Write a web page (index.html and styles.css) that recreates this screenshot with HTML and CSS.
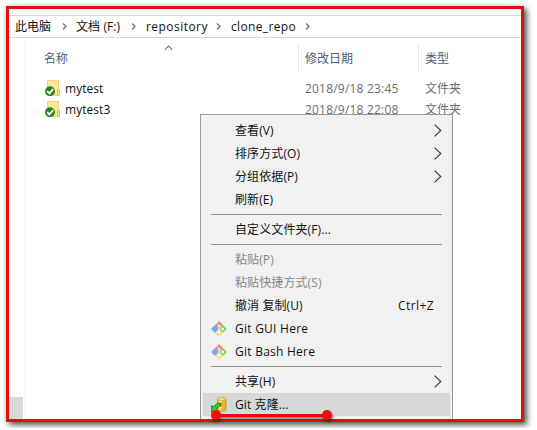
FILE: index.html
```html
<!DOCTYPE html>
<html lang="zh-CN">
<head>
<meta charset="utf-8">
<title>clone_repo</title>
<link rel="stylesheet" href="styles.css">
</head>
<body>
<svg class="defs" width="0" height="0">
  <symbol id="chev" viewBox="0 0 5 7"><path d="M1 .5 4 3.5 1 6.5" fill="none" stroke="#777" stroke-width="1.4"/></symbol>
  <symbol id="sub" viewBox="0 0 8 13"><path d="M.6.6 6.8 6.5.6 12.4" fill="none" stroke="#333" stroke-width="1.1"/></symbol>
  <symbol id="folder" viewBox="0 0 16 17">
    <path d="M2.5.5h11v15h-11z" fill="#ffe799" stroke="#efd27c"/>
    <path d="M12.5 9.5h2v6h-2z" fill="#ffe08a" stroke="#e3bd55"/>
    <circle cx="5" cy="11.2" r="5" fill="#298a1c"/>
    <path d="M2.2 11.2 4.4 13.4 8.2 9" fill="none" stroke="#fff" stroke-width="1.8"/>
  </symbol>
  <symbol id="git" viewBox="0 0 16 16">
    <path d="M8 0 12 4 8 8 4 4z" fill="#ef8587"/>
    <path d="M4 4 8 8 4 12 0 8z" fill="#7ba6ec"/>
    <path d="M12 4 16 8 12 12 8 8z" fill="#86d36b"/>
    <path d="M8 8 12 12 8 16 4 12z" fill="#fbdf8a"/>
    <path d="M5.600 2 8 4.500 11.500 8M8 5v7" fill="none" stroke="#f6efed" stroke-width=".9"/>
    <circle cx="8" cy="5" r="1" fill="#fff"/><circle cx="11.800" cy="8" r="1.300" fill="#fff"/><circle cx="8" cy="11.500" r="1.100" fill="#fff"/>
  </symbol>
  <symbol id="clone" viewBox="0 0 16 16">
    <path d="M6.5 2v10.5c0 2 8.5 2 8.5 0V2z" fill="#f0b52c" stroke="#c58a17" stroke-width=".8"/>
    <path d="M8 3v10h2.500V3z" fill="#ffe48a"/>
    <ellipse cx="10.750" cy="2" rx="4.200" ry="1.500" fill="#ffe27d" stroke="#d39a22" stroke-width=".7"/>
    <path d="M10 6.200C6 5.800 3.600 7.400 3 10.200L.6 8.500V15.400H7.500L5.600 12.500C5.800 10.400 7.200 9 10 9z" fill="#43c52d" stroke="#147a15" stroke-width=".9"/>
  </symbol>
</svg>
<div class="frame">
  <nav class="path">
    <span class="c1">此电脑</span><svg><use href="#chev"/></svg>
    <span class="c2">文档 (F:)</span><svg><use href="#chev"/></svg>
    <span class="c3">repository</span><svg><use href="#chev"/></svg>
    <span class="c4">clone_repo</span><svg><use href="#chev"/></svg>
  </nav>
  <div class="body">
    <aside class="side"><div class="thumb"></div></aside>
    <main class="list">
      <div class="head"><span class="name">名称<svg class="sort" viewBox="0 0 9 6"><path d="M.8 4.800 4.500 1 8.200 4.800" fill="none" stroke="#777" stroke-width="1.200"/></svg></span><span class="date">修改日期</span><span class="type">类型</span></div>
      <div class="row"><svg><use href="#folder"/></svg><span class="name">mytest</span><span class="date">2018/9/18 23:45</span><span class="type">文件夹</span></div>
      <div class="row"><svg><use href="#folder"/></svg><span class="name">mytest3</span><span class="date">2018/9/18 22:08</span><span class="type">文件夹</span></div>
    </main>
  </div>
  <div class="clip">
    <ul class="menu">
      <li><span>查看(V)</span><svg class="arrow"><use href="#sub"/></svg></li>
      <li><span>排序方式(O)</span><svg class="arrow"><use href="#sub"/></svg></li>
      <li><span>分组依据(P)</span><svg class="arrow"><use href="#sub"/></svg></li>
      <li><span>刷新(E)</span></li>
      <li class="sep"></li>
      <li><span>自定义文件夹(F)...</span></li>
      <li class="sep"></li>
      <li class="off"><span>粘贴(P)</span></li>
      <li class="off"><span>粘贴快捷方式(S)</span></li>
      <li><span>撤消 复制(U)</span><span class="key">Ctrl+Z</span></li>
      <li><svg class="icon"><use href="#git"/></svg><span class="lat">Git GUI Here</span></li>
      <li><svg class="icon"><use href="#git"/></svg><span class="lat">Git Bash Here</span></li>
      <li class="sep"></li>
      <li><span>共享(H)</span><svg class="arrow"><use href="#sub"/></svg></li>
      <li class="hot"><svg class="icon"><use href="#clone"/></svg><span>Git 克隆...</span></li>
    </ul>
  </div>
  <div class="underline"></div>
</div>
</body>
</html>
```
FILE: styles.css
```css
* { box-sizing: border-box; }
body {
  margin: 0;
  padding: 6px;
  background: #fff;
  font: 12px/16px "Open Sans", "Noto Sans CJK SC", sans-serif;
  color: #111;
  overflow: hidden;
}
.defs { position: absolute; }
span { white-space: nowrap; }
.frame {
  position: relative;
  width: 518px;
  height: 416px;
  border: 3px solid #e60d0d;
  background: #fff;
  box-shadow: 3px 3px 6px rgba(0, 0, 0, .65), 0 0 4px rgba(0, 0, 0, .15);
}
.path {
  display: flex;
  align-items: center;
  height: 23px;
  margin-top: 6px;
  padding-left: 6px;
  border-top: 1px solid #d9d9d9;
  border-bottom: 1px solid #d9d9d9;
}
.path span { flex: none; }
.path svg { width: 5px; height: 7px; flex: none; }
.c1 { width: 47px; }
.c2 { width: 54px; margin-left: 9px; letter-spacing: .1px; }
.c2 + svg { margin-left: 1px; }
.c3 { width: 70px; margin-left: 10px; letter-spacing: .45px; }
.c4 { width: 74px; margin-left: 10px; letter-spacing: .35px; }
.body { display: flex; height: 381px; }
.side {
  display: flex;
  align-items: flex-end;
  width: 17px;
  border-right: 1px solid #f1f1f1;
}
.thumb { width: 14px; height: 22px; background: #d9d9d9; }
.list { flex: 1; padding-top: 7px; }
.head { display: flex; height: 27px; line-height: 27px; color: #4c607a; }
.head .name { position: relative; width: 272px; padding-left: 18px; }
.head .date { width: 120px; padding-left: 6px; border-left: 1px solid #e2e2e2; }
.head .type { padding-left: 6px; border-left: 1px solid #e2e2e2; }
.sort { position: absolute; left: 138px; top: 0; width: 9px; height: 6px; }
.row { display: flex; align-items: center; height: 21px; padding-left: 18px; color: #6d6d6d; }
.row svg { width: 16px; height: 17px; margin: 0 4px 0 1px; }
.row .name { width: 240px; color: #111; letter-spacing: .05px; }
.row .date { width: 120px; letter-spacing: .2px; }
.head + .row { margin-top: 6px; }
.clip { position: absolute; left: 191px; top: 105px; width: 253px; height: 305px; overflow: hidden; }
.menu {
  list-style: none;
  margin: 0;
  padding: 4px 2px;
  height: 320px;
  background: #f1f1f1;
  border: 1px solid #999;
}
.menu li { display: flex; align-items: center; height: 23px; padding-left: 32px; letter-spacing: .1px; }
.menu .sep { height: 7px; padding: 0 8px; }
.sep::before { content: ""; flex: 1; height: 1px; background: #919191; }
.menu .off { color: #868686; }
.menu .hot { background: #d8d8d8; }
.icon { width: 16px; height: 16px; margin: 0 8px 0 -24px; }
.arrow { width: 8px; height: 13px; margin: -1px 8px 0 auto; }
.key { margin: 0 16px 0 auto; letter-spacing: .4px; }
.lat { letter-spacing: .25px; }
.underline {
  position: absolute;
  left: 206px;
  top: 405px;
  width: 113px;
  height: 3px;
  background: #e80b0b;
  filter: drop-shadow(1px 2px 1px rgba(0, 0, 0, .5));
}
.underline::before, .underline::after {
  content: "";
  position: absolute;
  top: -4px;
  width: 10px;
  height: 10px;
  border-radius: 50%;
  background: #f50b0b;
}
.underline::before { left: -4px; }
.underline::after { right: -4px; }
```
